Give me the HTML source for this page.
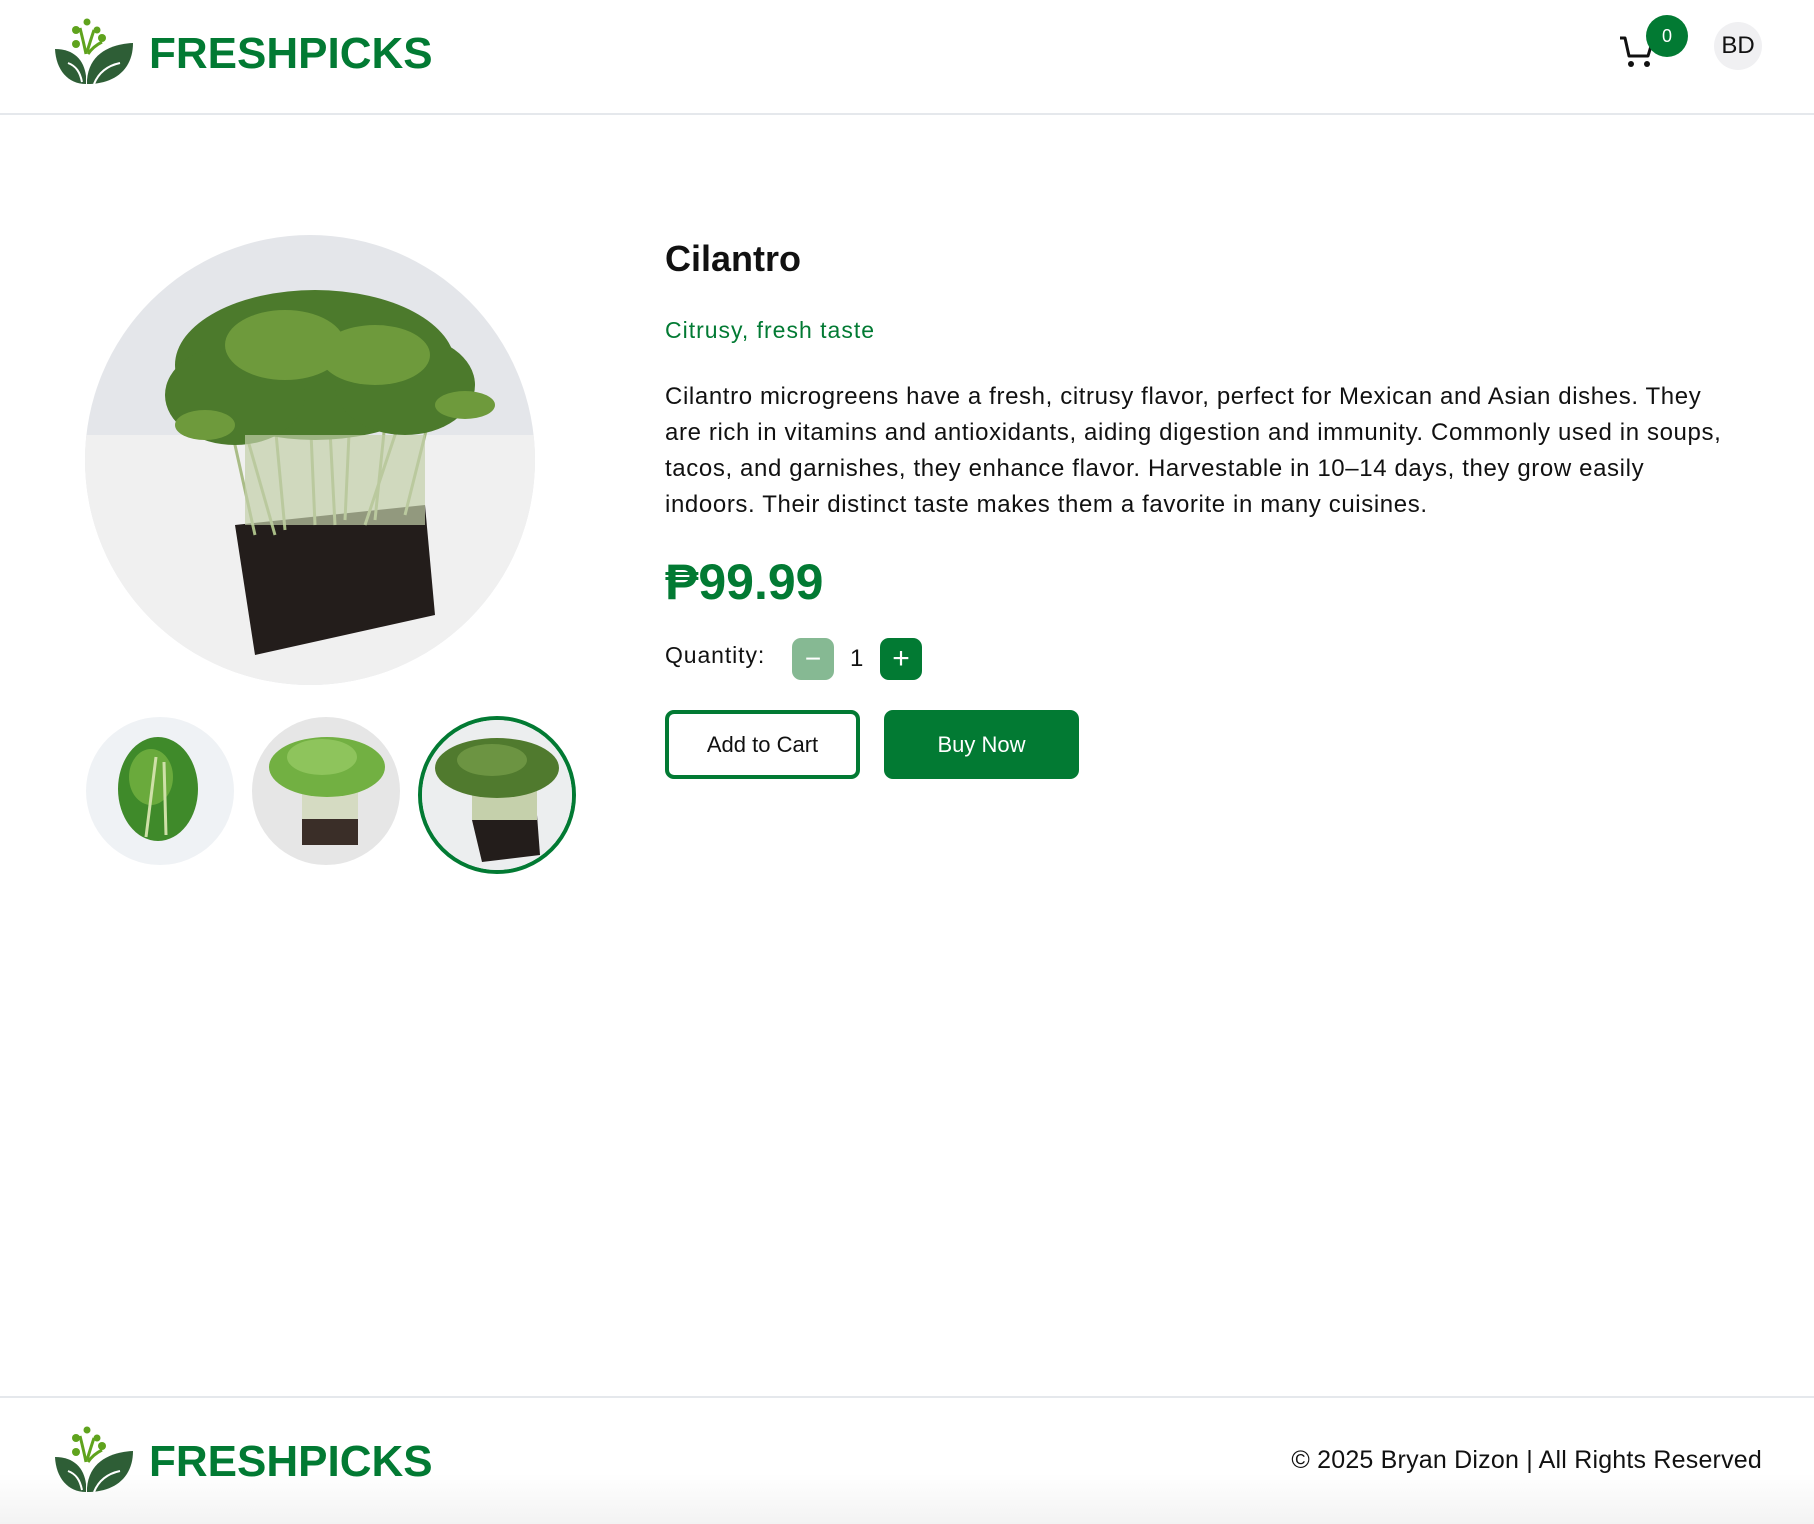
<!DOCTYPE html>
<html><head><meta charset="utf-8"><style>
*{margin:0;padding:0;box-sizing:border-box}
body{width:1814px;height:1524px;background:#fff;font-family:"Liberation Sans",sans-serif;color:#111;position:relative;overflow:hidden}
.abs{position:absolute}
.brand{font-weight:bold;color:#027a33;font-size:44px;letter-spacing:0px}
.hdr{left:0;top:0;width:1814px;height:115px;border-bottom:2px solid #e5e8ec}
.ftr{left:0;top:1396px;width:1814px;height:128px;border-top:2px solid #e5e8ec;background:linear-gradient(#fff 60%,#f3f3f3)}
.btn{position:absolute;height:69px;border-radius:9px;font-size:22px;display:flex;align-items:center;justify-content:center}
</style></head><body>
<div class="abs hdr"></div>
<svg class="abs" style="left:54px;top:18px" width="80" height="68" viewBox="0 0 80 68">
<path d="M1 31 C20 31 30 42 32 58 L32 66 C14 66 2 52 1 31Z" fill="#2e5e36"/>
<path d="M79 25 C56 26 35 36 33 62 L33 66 C60 66 79 52 79 25Z" fill="#2e5e36"/>
<path d="M14 45 C22 48 26 54 28 64" stroke="#fff" stroke-width="2" fill="none"/>
<path d="M66 45 C52 48 44 56 40 66" stroke="#fff" stroke-width="2" fill="none"/>
<path d="M32 36 C30 26 28 18 26 10 M33 34 C36 24 38 18 40 12 M34 36 C38 30 44 26 48 24" stroke="#5fa31d" stroke-width="3" fill="none"/>
<circle cx="33" cy="4" r="3.5" fill="#5fa31d"/><circle cx="22" cy="12" r="4" fill="#5fa31d"/><circle cx="43" cy="12" r="3.5" fill="#5fa31d"/><circle cx="48" cy="20" r="4" fill="#5fa31d"/><circle cx="22" cy="26" r="4" fill="#5fa31d"/>
</svg>
<div class="abs brand" style="left:149px;top:29px">FRESHPICKS</div>
<svg class="abs" style="left:1618px;top:34px" width="36" height="36" viewBox="0 0 36 36"><path d="M2 4 H7 L11 22 H30 L33 12" stroke="#111" stroke-width="3" fill="none" stroke-linejoin="round"/><circle cx="13" cy="30" r="3" fill="#111"/><circle cx="29" cy="30" r="3" fill="#111"/></svg>
<div class="abs" style="left:1646px;top:15px;width:42px;height:42px;border-radius:50%;background:#027a33;color:#fff;font-size:18px;display:flex;align-items:center;justify-content:center">0</div>
<div class="abs" style="left:1714px;top:22px;width:48px;height:48px;border-radius:50%;background:#f0f0f2;font-size:24px;display:flex;align-items:center;justify-content:center">BD</div>

<svg class="abs" style="left:85px;top:235px" width="450" height="450" viewBox="0 0 450 450">
<defs><clipPath id="c1"><circle cx="225" cy="225" r="225"/></clipPath></defs>
<g clip-path="url(#c1)">
<rect width="450" height="450" fill="#e4e6ea"/><rect y="200" width="450" height="250" fill="#f0f0f0"/>
<path d="M150 290 L340 270 L350 380 L170 420Z" fill="#231d1b"/>
<g stroke="#a9bc86" stroke-width="3">
<path d="M170 300 L130 120 M200 295 L180 80 M230 290 L220 60 M260 285 L270 70 M290 285 L310 90 M320 280 L360 120 M190 300 L150 160 M250 290 L240 100 M280 290 L330 140"/></g>
<g fill="#4c7a2c"><ellipse cx="230" cy="130" rx="140" ry="75"/><ellipse cx="150" cy="160" rx="70" ry="50"/><ellipse cx="320" cy="150" rx="70" ry="50"/></g>
<g fill="#6e9a3c"><ellipse cx="200" cy="110" rx="60" ry="35"/><ellipse cx="290" cy="120" rx="55" ry="30"/><ellipse cx="120" cy="190" rx="30" ry="15"/><ellipse cx="380" cy="170" rx="30" ry="14"/></g>
<rect x="160" y="200" width="180" height="90" fill="#c2cfa8" opacity=".7"/>
</g></svg>

<svg class="abs" style="left:86px;top:717px" width="148" height="148" viewBox="0 0 148 148"><circle cx="74" cy="74" r="74" fill="#eff2f5"/><ellipse cx="72" cy="72" rx="40" ry="52" fill="#3f8a2a"/><ellipse cx="65" cy="60" rx="22" ry="28" fill="#6aaa3c"/><path d="M60 120 L70 40 M80 118 L78 45" stroke="#cfe0a8" stroke-width="3"/></svg>
<svg class="abs" style="left:252px;top:717px" width="148" height="148" viewBox="0 0 148 148"><defs><clipPath id="c2"><circle cx="74" cy="74" r="74"/></clipPath></defs><g clip-path="url(#c2)"><rect width="148" height="148" fill="#e6e6e6"/><rect x="50" y="100" width="56" height="28" fill="#3a2e28"/><rect x="50" y="60" width="56" height="42" fill="#d5dbc2"/><ellipse cx="75" cy="50" rx="58" ry="30" fill="#72b042"/><ellipse cx="70" cy="40" rx="35" ry="18" fill="#8ec45c"/></g></svg>
<div class="abs" style="left:418px;top:716px;width:158px;height:158px;border-radius:50%;border:4px solid #027a33;overflow:hidden">
<svg width="150" height="150" viewBox="0 0 150 150"><rect width="150" height="150" fill="#eceeef"/><path d="M50 100 L115 95 L118 135 L60 142Z" fill="#231d1b"/><rect x="50" y="60" width="65" height="40" fill="#c5d0ab"/><ellipse cx="75" cy="48" rx="62" ry="30" fill="#507a2e"/><ellipse cx="70" cy="40" rx="35" ry="16" fill="#6c9442"/></svg></div>

<div class="abs" style="left:665px;top:238px;font-size:36px;font-weight:bold">Cilantro</div>
<div class="abs" style="left:665px;top:317px;font-size:23px;color:#027a33;letter-spacing:1px">Citrusy, fresh taste</div>
<div class="abs" style="left:665px;top:379px;font-size:24px;line-height:36px;white-space:nowrap;letter-spacing:0.62px">Cilantro microgreens have a fresh, citrusy flavor, perfect for Mexican and Asian dishes. They<br>are rich in vitamins and antioxidants, aiding digestion and immunity. Commonly used in soups,<br>tacos, and garnishes, they enhance flavor. Harvestable in 10–14 days, they grow easily<br>indoors. Their distinct taste makes them a favorite in many cuisines.</div>
<div class="abs" style="left:665px;top:553px;font-size:50px;font-weight:bold;color:#027a33">₱99.99</div>
<div class="abs" style="left:665px;top:642px;font-size:23px;letter-spacing:0.9px">Quantity:</div>
<div class="abs" style="left:792px;top:638px;width:42px;height:42px;border-radius:9px;background:#86b993;color:#fff;font-size:28px;display:flex;align-items:center;justify-content:center">−</div>
<div class="abs" style="left:850px;top:645px;font-size:24px">1</div>
<div class="abs" style="left:880px;top:638px;width:42px;height:42px;border-radius:9px;background:#027a33;color:#fff;font-size:30px;display:flex;align-items:center;justify-content:center">+</div>
<div class="btn" style="left:665px;top:710px;width:195px;border:4px solid #027a33;color:#111">Add to Cart</div>
<div class="btn" style="left:884px;top:710px;width:195px;background:#027a33;color:#fff">Buy Now</div>

<div class="abs ftr"></div>
<svg class="abs" style="left:54px;top:1426px" width="80" height="68" viewBox="0 0 80 68">
<path d="M1 31 C20 31 30 42 32 58 L32 66 C14 66 2 52 1 31Z" fill="#2e5e36"/>
<path d="M79 25 C56 26 35 36 33 62 L33 66 C60 66 79 52 79 25Z" fill="#2e5e36"/>
<path d="M14 45 C22 48 26 54 28 64" stroke="#fff" stroke-width="2" fill="none"/>
<path d="M66 45 C52 48 44 56 40 66" stroke="#fff" stroke-width="2" fill="none"/>
<path d="M32 36 C30 26 28 18 26 10 M33 34 C36 24 38 18 40 12 M34 36 C38 30 44 26 48 24" stroke="#5fa31d" stroke-width="3" fill="none"/>
<circle cx="33" cy="4" r="3.5" fill="#5fa31d"/><circle cx="22" cy="12" r="4" fill="#5fa31d"/><circle cx="43" cy="12" r="3.5" fill="#5fa31d"/><circle cx="48" cy="20" r="4" fill="#5fa31d"/><circle cx="22" cy="26" r="4" fill="#5fa31d"/>
</svg>
<div class="abs brand" style="left:149px;top:1437px">FRESHPICKS</div>
<div class="abs" style="right:52px;top:1446px;font-size:25px;letter-spacing:0.2px">© 2025 Bryan Dizon | All Rights Reserved</div>
</body></html>
